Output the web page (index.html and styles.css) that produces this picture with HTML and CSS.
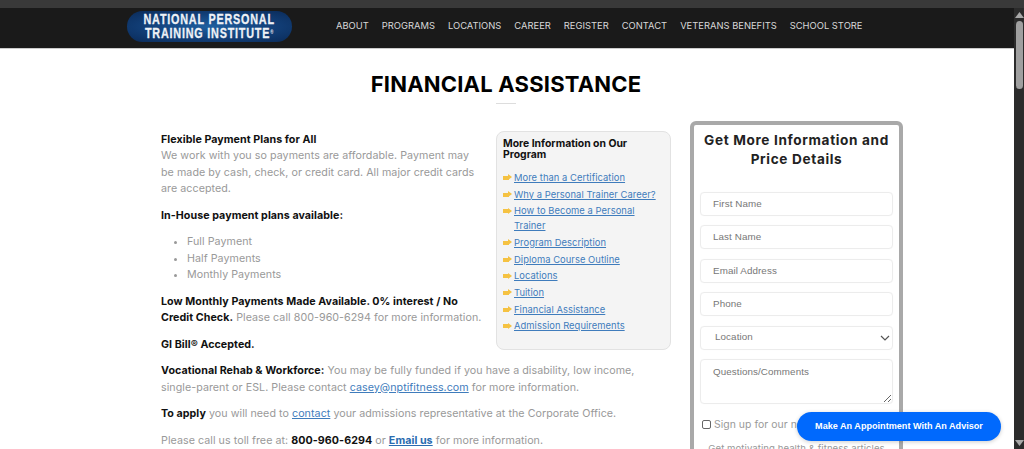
FILE: index.html
```html
<!DOCTYPE html>
<html lang="en">
<head>
<meta charset="utf-8">
<title>Financial Assistance</title>
<link rel="stylesheet" href="styles.css">
</head>
<body>
<div class="chrome-strip"></div>
<div class="window">
  <div class="page">
    <header class="topbar">
      <div class="logo"><span>NATIONAL PERSONAL</span><span>TRAINING INSTITUTE<sup>®</sup></span></div>
      <nav class="nav">
        <a>ABOUT</a><a>PROGRAMS</a><a>LOCATIONS</a><a>CAREER</a><a>REGISTER</a><a>CONTACT</a><a>VETERANS BENEFITS</a><a>SCHOOL STORE</a>
      </nav>
    </header>
    <h1 class="title">FINANCIAL ASSISTANCE</h1>
    <div class="rule"></div>
    <div class="columns">
      <main class="main">
        <div class="top-split">
          <div class="lead">
            <p><b>Flexible Payment Plans for All</b><br>We work with you so payments are affordable. Payment may be made by cash, check, or credit card. All major credit cards are accepted.</p>
            <p><b>In-House payment plans available:</b></p>
            <ul class="plans"><li>Full Payment</li><li>Half Payments</li><li>Monthly Payments</li></ul>
            <p><b>Low Monthly Payments Made Available. 0% interest / No Credit Check.</b> Please call 800-960-6294 for more information.</p>
            <p><b>GI Bill® Accepted.</b></p>
          </div>
          <aside class="info">
            <h2>More Information on Our Program</h2>
            <ul>
              <li><a>More than a Certification</a></li>
              <li><a>Why a Personal Trainer Career?</a></li>
              <li><a>How to Become a Personal Trainer</a></li>
              <li><a>Program Description</a></li>
              <li><a>Diploma Course Outline</a></li>
              <li><a>Locations</a></li>
              <li><a>Tuition</a></li>
              <li><a>Financial Assistance</a></li>
              <li><a>Admission Requirements</a></li>
            </ul>
          </aside>
        </div>
        <p><b>Vocational Rehab &amp; Workforce:</b> You may be fully funded if you have a disability, low income, single-parent or ESL. Please contact <a class="link">casey@nptifitness.com</a> for more information.</p>
        <p><b>To apply</b> you will need to <a class="link">contact</a> your admissions representative at the Corporate Office.</p>
        <p>Please call us toll free at: <b>800-960-6294</b> or <a class="link strong">Email us</a> for more information.</p>
      </main>
      <aside class="form-card">
        <h2>Get More Information and Price Details</h2>
        <div class="field">First Name</div>
        <div class="field">Last Name</div>
        <div class="field">Email Address</div>
        <div class="field">Phone</div>
        <div class="field select">Location
          <svg width="10" height="6" viewBox="0 0 10 6"><path d="M1 1l4 4 4-4" fill="none" stroke="#555" stroke-width="1.2"/></svg>
        </div>
        <div class="field area">Questions/Comments
          <svg class="grip" width="7" height="7" viewBox="0 0 7 7"><path d="M0 7l7-7M4 7l3-3" stroke="#666" stroke-width="1"/></svg>
        </div>
        <label class="signup"><span class="box"></span>Sign up for our newsletter</label>
        <p class="note">Get motivating health &amp; fitness articles</p>
      </aside>
    </div>
    <div class="cta">Make An Appointment With An Advisor</div>
  </div>
  <div class="scrollbar">
    <svg class="arrow" width="9" height="6" viewBox="0 0 9 6"><path d="M4.5 0L9 6H0z" fill="#a8a8a8"/></svg>
    <div class="thumb"></div>
    <svg class="arrow low" width="9" height="6" viewBox="0 0 9 6"><path d="M4.5 6L9 0H0z" fill="#a8a8a8"/></svg>
  </div>
</div>
</body>
</html>
```
FILE: styles.css
```css
* { box-sizing: border-box; }
html, body { margin: 0; height: 449px; overflow: hidden; background: #fff; }
body {
  font-family: Inter, "Open Sans", "Liberation Sans", sans-serif;
  font-size: 10.7px;
  line-height: 16.4px;
  color: #999;
  letter-spacing: 0.05px;
}
.chrome-strip { height: 8px; background: #393939; }
.window { display: flex; height: 441px; }
.page { flex: 1; min-width: 0; position: relative; overflow: hidden; }
.topbar {
  height: 41px;
  background: #1a1a1a;
  display: flex;
  align-items: center;
  padding: 0 0 0 127px;
  border-bottom: 1px solid #ccc;
}
.logo {
  width: 165px;
  height: 31px;
  margin-top: -4px;
  border-radius: 16px;
  background: radial-gradient(ellipse at 50% 50%, #1f5f9f 0%, #123f78 55%, #0a2a58 100%);
  color: #eef1f6;
  font-family: "Liberation Sans", sans-serif;
  font-weight: 700;
  font-size: 15px;
  line-height: 14.5px;
  display: flex;
  flex-direction: column;
  align-items: center;
  justify-content: center;
  letter-spacing: 1.1px;
  -webkit-text-stroke: 0.3px #eef1f6;
}
.logo span { white-space: nowrap; transform: scaleX(.72); }
.logo sup { font-size: 6px; line-height: 0; vertical-align: 4px; letter-spacing: 0; -webkit-text-stroke: 0; }
.nav { display: flex; gap: 13px; margin-left: 44px; margin-top: -3px; }
.nav a { color: #d8d8d8; font-size: 9.4px; white-space: nowrap; letter-spacing: 0; }
.title {
  margin: 22px 0 0;
  text-align: center;
  color: #000;
  font-size: 22px;
  line-height: 26px;
  font-weight: 700;
  letter-spacing: 0.2px;
  padding-right: 2px;
}
.rule { width: 20px; height: 1px; background: #ddd; margin: 6px auto 0; position: relative; left: -1px; }
.columns { display: flex; padding-left: 161px; margin-top: 17px; gap: 19px; align-items: flex-start; }
.main { width: 510px; flex: none; margin-top: 11px; }
.top-split { display: flex; justify-content: space-between; align-items: flex-start; }
.lead { width: 321.5px; flex: none; }
p { margin: 0 0 10.2px; }
b { color: #111; font-weight: 700; }
.plans { margin: 0 0 10.2px; padding: 0 0 0 26px; list-style: disc; }
.info {
  width: 175px;
  height: 219px;
  margin-top: -1px;
  background: #f4f4f4;
  border: 1px solid #e2e2e2;
  border-radius: 8px;
  padding: 6px 5px 6px 6px;
  flex: none;
}
.info h2 { margin: 0 0 9px; color: #111; font-size: 10.4px; line-height: 11.4px; font-weight: 700; letter-spacing: 0; }
.info ul { list-style: none; margin: 0; padding: 0; font-size: 9.4px; line-height: 15px; letter-spacing: 0.05px; }
.info li { position: relative; padding-left: 11px; margin-bottom: 1.7px; }
.info li::before {
  content: "";
  position: absolute;
  left: 0; top: 6px;
  width: 6px; height: 4px;
  background: #f5c242;
}
.info li::after {
  content: "";
  position: absolute;
  left: 5px; top: 4.5px;
  border-left: 4px solid #f5c242;
  border-top: 3.5px solid transparent;
  border-bottom: 3.5px solid transparent;
}
.info a, .link { color: #3f7cbc; text-decoration: underline; }
.link.strong { font-weight: 700; color: #2a6cb0; }
.form-card {
  width: 213px;
  height: 360px;
  flex: none;
  background: #fff;
  border: 4px solid #a9a9a9;
  border-radius: 6px;
  padding: 6px 6px 5px;
}
.form-card h2 {
  margin: 0 0 23px;
  text-align: center;
  color: #222;
  font-size: 13.6px;
  line-height: 19px;
  font-weight: 700;
  letter-spacing: 0.65px;
}
.field {
  height: 24px;
  border: 1px solid #ececec;
  border-radius: 4px;
  margin-bottom: 9.4px;
  padding: 0 12px;
  display: flex;
  align-items: center;
  font-family: "Liberation Sans", sans-serif;
  font-size: 9.8px;
  letter-spacing: 0.1px;
  color: #777;
  box-shadow: 0 0 1px rgba(0,0,0,.05);
}
.select { justify-content: space-between; padding: 0 2px 0 14px; }
.area { height: 45px; align-items: flex-start; padding-top: 4px; position: relative; margin-bottom: 14px; }
.grip { position: absolute; right: 1px; bottom: 1px; }
.signup { display: flex; align-items: center; gap: 3px; white-space: nowrap; margin-left: 2px; font-size: 10.4px; line-height: 14px; }
.box { width: 9px; height: 9px; border: 1px solid #666; border-radius: 2px; }
.note { margin: 9px 0 0; text-align: center; font-size: 9.6px; white-space: nowrap; }
.cta {
  position: absolute;
  left: 797px;
  top: 404px;
  width: 204px;
  height: 29px;
  border-radius: 15px;
  background: #0069fd;
  color: #fff;
  font-family: "Liberation Sans", sans-serif;
  font-weight: 700;
  font-size: 9.1px;
  display: flex;
  align-items: center;
  justify-content: center;
  letter-spacing: 0;
  box-shadow: 0 1px 4px rgba(0,0,0,.2);
}
.scrollbar {
  width: 10px;
  flex: none;
  background: #2b2b2b;
  display: flex;
  flex-direction: column;
  align-items: center;
  padding-top: 4px;
}
.arrow { flex: none; }
.thumb { width: 7px; height: 68px; margin-top: 3px; border-radius: 4px; background: #9f9f9f; }
.arrow.low { margin-top: auto; margin-bottom: 3px; }
```
